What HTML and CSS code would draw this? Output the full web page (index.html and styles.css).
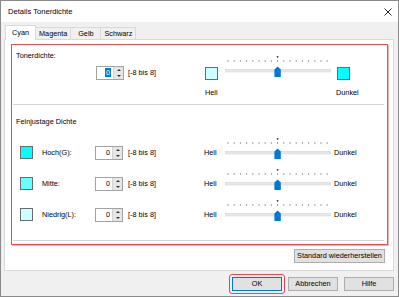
FILE: index.html
```html
<!DOCTYPE html>
<html lang="de">
<head>
    <title>Details Tonerdichte</title>
    <link rel="stylesheet" href="styles.css">
</head>
<body>
<svg class="defs" width="0" height="0">
    <symbol id="slider" viewBox="0 0 112 24">
        <path d="M53.4 1.2h2.4l-1.2 1.8z" fill="#222"/>
        <path d="M5 5v2M11.2 5v2M17.4 5v2M23.6 5v2M29.8 5v2M36 5v2M42.2 5v2M48.4 5v2M54.6 5v2M60.8 5v2M67 5v2M73.2 5v2M79.4 5v2M85.6 5v2M91.8 5v2M98 5v2M104.2 5v2"
              stroke="#8c8c8c" stroke-width="0.8"/>
        <rect x="2.5" y="14.5" width="105" height="2.5" fill="#e7e7e7" stroke="#d6d6d6" stroke-width="0.6"/>
        <path d="M51.4 22V14.6L54.6 11.5L57.8 14.6V22Z" fill="#0078d7"/>
    </symbol>
</svg>
<div class="window">
    <div class="titlebar">
        <span>Details Tonerdichte</span>
        <svg class="close" width="10" height="10" viewBox="0 0 10 10">
            <path d="M1.5 1.5l7 7M8.5 1.5l-7 7" stroke="#111" stroke-width="0.9"/>
        </svg>
    </div>
    <div class="tabs">
        <div class="tab active">Cyan</div>
        <div class="tab">Magenta</div>
        <div class="tab">Gelb</div>
        <div class="tab">Schwarz</div>
    </div>
    <div class="panel">
        <div class="marked">
            <div class="group group-main">
                <div class="main-left">
                    <div class="caption">Tonerdichte:</div>
                    <div class="spin-row main-spin">
                        <div class="spin">
                            <span class="spin-value"><b class="sel">0</b></span>
                            <span class="spin-btns"><i class="up"></i><i class="down"></i></span>
                        </div>
                        <span class="range">[-8 bis 8]</span>
                    </div>
                </div>
                <div class="main-right">
                    <div class="scale">
                        <span class="swatch light"></span>
                        <svg class="slider"><use href="#slider"/></svg>
                        <span class="swatch full"></span>
                    </div>
                    <div class="scale-labels">
                        <span>Hell</span>
                        <span>Dunkel</span>
                    </div>
                </div>
            </div>
            <div class="group group-fine">
                <div class="caption">Feinjustage Dichte</div>
                <div class="fine-rows">
                    <div class="fine-row">
                        <span class="swatch full"></span>
                        <span class="fine-label">Hoch(G):</span>
                        <div class="spin">
                            <span class="spin-value">0</span>
                            <span class="spin-btns"><i class="up"></i><i class="down"></i></span>
                        </div>
                        <span class="range fine-range">[-8 bis 8]</span>
                        <span class="end-label">Hell</span>
                        <svg class="slider"><use href="#slider"/></svg>
                        <span class="end-label dark">Dunkel</span>
                    </div>
                    <div class="fine-row">
                        <span class="swatch mid"></span>
                        <span class="fine-label">Mitte:</span>
                        <div class="spin">
                            <span class="spin-value">0</span>
                            <span class="spin-btns"><i class="up"></i><i class="down"></i></span>
                        </div>
                        <span class="range fine-range">[-8 bis 8]</span>
                        <span class="end-label">Hell</span>
                        <svg class="slider"><use href="#slider"/></svg>
                        <span class="end-label dark">Dunkel</span>
                    </div>
                    <div class="fine-row">
                        <span class="swatch light"></span>
                        <span class="fine-label">Niedrig(L):</span>
                        <div class="spin">
                            <span class="spin-value">0</span>
                            <span class="spin-btns"><i class="up"></i><i class="down"></i></span>
                        </div>
                        <span class="range fine-range">[-8 bis 8]</span>
                        <span class="end-label">Hell</span>
                        <svg class="slider"><use href="#slider"/></svg>
                        <span class="end-label dark">Dunkel</span>
                    </div>
                </div>
            </div>
        </div>
        <div class="panel-actions">
            <button class="btn btn-wide">Standard wiederherstellen</button>
        </div>
    </div>
    <div class="footer">
        <span class="ok-ring"><button class="btn btn-default">OK</button></span>
        <button class="btn">Abbrechen</button>
        <button class="btn">Hilfe</button>
    </div>
</div>
</body>
</html>
```

FILE: styles.css
```css
body {
    margin: 0;
    font-family: 'Liberation Sans', Arial, sans-serif;
    font-size: 7.3px;
    line-height: 10px;
    color: #000;
}
.defs {
    position: absolute;
}
.window {
    width: 399px;
    height: 297px;
    box-sizing: border-box;
    border: 1px solid #8a8a8a;
    background-color: #f0f0f0;
    display: flex;
    flex-direction: column;
}
.titlebar {
    height: 21px;
    background-color: #fff;
    display: flex;
    align-items: center;
    justify-content: space-between;
    padding-left: 7px;
    font-size: 7.6px;
}
.close {
    margin-right: 5px;
}
.tabs {
    height: 17px;
    display: flex;
    align-items: flex-end;
    padding-left: 5px;
}
.tab {
    height: 12px;
    min-width: 31px;
    box-sizing: border-box;
    border: 1px solid #d9d9d9;
    border-bottom: none;
    background-color: #f0f0f0;
    padding: 0 3px;
    margin-left: -1px;
    line-height: 11px;
    text-align: center;
}
.tab.active {
    height: 15px;
    margin-bottom: -1px;
    background-color: #fff;
    position: relative;
    z-index: 1;
    line-height: 13px;
}
.panel {
    height: 232px;
    box-sizing: border-box;
    margin: 0 4px 0 3px;
    border: 1px solid #d9d9d9;
    background-color: #fff;
    display: flex;
    flex-direction: column;
}
.marked {
    margin: 4px 5px 0 6px;
    border: 1px solid #ea4d4f;
    box-shadow: 1px 1px 0 #f7b3b4;
    padding-bottom: 3px;
}
.group {
    margin: 0 3px 0 1px;
    border-bottom: 1px solid #d5d5d5;
}
.group-main {
    height: 53px;
    padding-top: 6px;
    display: flex;
    align-items: flex-start;
}
.caption {
    padding-left: 3px;
}
.main-left {
    width: 192px;
}
.main-spin {
    margin: 5px 0 0 83px;
}
.spin-row {
    display: flex;
    align-items: center;
}
.range {
    margin-left: 4px;
}
.main-right {
    margin-top: 4px;
}
.scale {
    display: flex;
    align-items: flex-start;
}
.scale .swatch {
    margin-top: 12px;
}
.scale .slider {
    margin: 0 2px 0 5px;
}
.scale-labels {
    display: grid;
    grid-template-columns: 131px auto;
    margin-top: 8px;
}
.slider {
    width: 112px;
    height: 24px;
    flex: none;
}
.swatch {
    width: 13px;
    height: 13px;
    box-sizing: border-box;
    border: 1px solid #6b6b6b;
    flex: none;
}
.swatch.light {
    background-color: #ccffff;
}
.swatch.mid {
    background-color: #66ffff;
}
.swatch.full {
    background-color: #00ffff;
}
.spin {
    width: 28px;
    height: 14px;
    box-sizing: border-box;
    border: 1px solid #a3a3a3;
    background-color: #fff;
    display: flex;
    flex: none;
}
.spin-value {
    flex: 1;
    text-align: right;
    padding-right: 2px;
    line-height: 12px;
}
.sel {
    font-weight: normal;
    background-color: #0078d7;
    color: #fff;
    padding: 0 1px;
}
.spin-btns {
    width: 9px;
    display: flex;
    flex-direction: column;
    background-color: #e6e6e6;
    border-left: 1px solid #d4d4d4;
}
.spin-btns i {
    flex: 1;
    display: flex;
    align-items: center;
    justify-content: center;
}
.spin-btns .up::before {
    content: "";
    border: 2px solid transparent;
    border-top: none;
    border-bottom: 2px solid #333;
}
.spin-btns .down::before {
    content: "";
    border: 2px solid transparent;
    border-bottom: none;
    border-top: 2px solid #333;
}
.group-fine {
    height: 123px;
    padding-top: 12px;
}
.fine-rows {
    margin-top: 10px;
}
.fine-row {
    height: 31px;
    display: flex;
    align-items: center;
}
.fine-row .swatch {
    margin-left: 7px;
}
.fine-label {
    width: 53px;
    margin-left: 9px;
}
.fine-range {
    width: 76px;
    margin-left: 5px;
}
.end-label {
    width: 19px;
}
.end-label.dark {
    margin-left: -1px;
}
.fine-row .slider {
    align-self: flex-start;
}
.panel-actions {
    display: flex;
    justify-content: flex-end;
    margin: 4px 8px 0 0;
}
.btn {
    height: 14px;
    width: 50px;
    box-sizing: border-box;
    padding: 0;
    border: 1px solid #adadad;
    background-color: #e1e1e1;
    font-family: inherit;
    font-size: 7.3px;
    line-height: 12px;
    color: #000;
}
.btn-wide {
    width: 91px;
}
.btn-default {
    border-color: #0078d7;
}
.footer {
    display: flex;
    justify-content: flex-end;
    align-items: center;
    gap: 6px;
    margin-top: 6px;
    padding-right: 4px;
}
.ok-ring {
    display: flex;
    padding: 2px;
    margin: -3px;
    border: 1px solid #e8474b;
    border-radius: 3px;
}
```
